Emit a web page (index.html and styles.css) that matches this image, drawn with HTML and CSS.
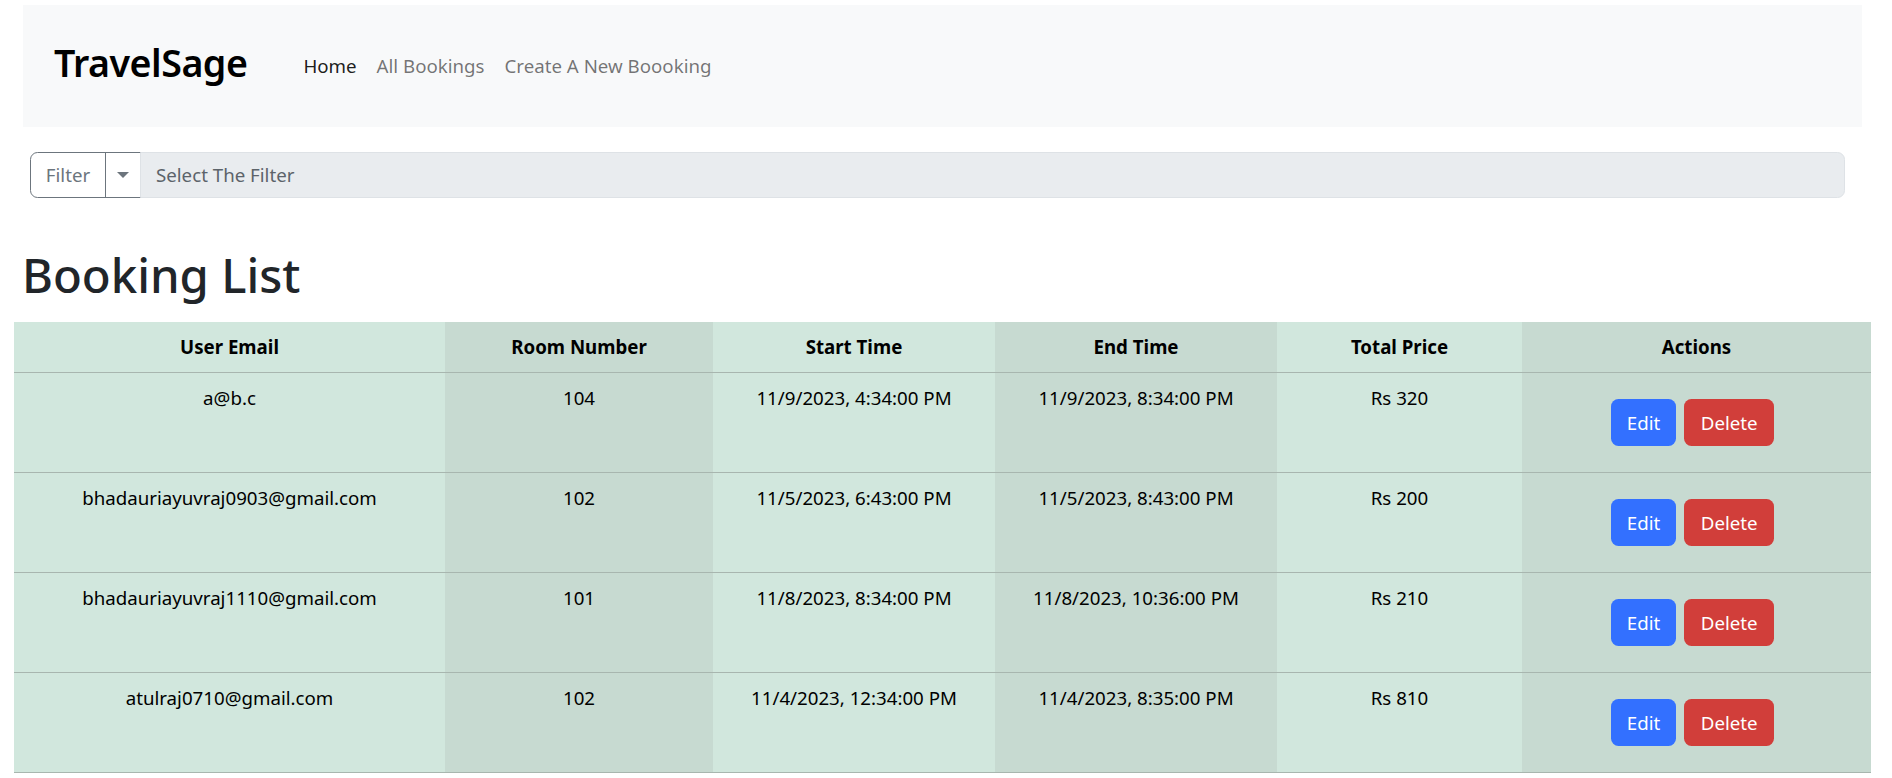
FILE: index.html
```html
<!DOCTYPE html>
<html lang="en">
<head>
<meta charset="utf-8">
<title>TravelSage</title>
<link rel="stylesheet" href="styles.css">
</head>
<body>
<nav class="navbar">
  <a class="brand" href="#">TravelSage</a>
  <ul class="nav">
    <li><a class="nav-link active" href="#">Home</a></li>
    <li><a class="nav-link" href="#">All Bookings</a></li>
    <li><a class="nav-link" href="#">Create A New Boooking</a></li>
  </ul>
</nav>

<div class="filter-group">
  <button class="filter-btn">Filter</button>
  <button class="filter-toggle"><span class="caret"></span></button>
  <div class="filter-input">Select The Filter</div>
</div>

<h1 class="title">Booking List</h1>

<table class="bookings">
  <thead>
    <tr>
      <th class="c-email">User Email</th>
      <th class="c-room">Room Number</th>
      <th class="c-start">Start Time</th>
      <th class="c-end">End Time</th>
      <th class="c-price">Total Price</th>
      <th class="c-actions">Actions</th>
    </tr>
  </thead>
  <tbody>
    <tr>
      <td>a@b.c</td>
      <td>104</td>
      <td>11/9/2023, 4:34:00 PM</td>
      <td>11/9/2023, 8:34:00 PM</td>
      <td>Rs 320</td>
      <td><div class="actions"><button class="btn btn-edit">Edit</button><button class="btn btn-delete">Delete</button></div></td>
    </tr>
    <tr>
      <td>bhadauriayuvraj0903@gmail.com</td>
      <td>102</td>
      <td>11/5/2023, 6:43:00 PM</td>
      <td>11/5/2023, 8:43:00 PM</td>
      <td>Rs 200</td>
      <td><div class="actions"><button class="btn btn-edit">Edit</button><button class="btn btn-delete">Delete</button></div></td>
    </tr>
    <tr>
      <td>bhadauriayuvraj1110@gmail.com</td>
      <td>101</td>
      <td>11/8/2023, 8:34:00 PM</td>
      <td>11/8/2023, 10:36:00 PM</td>
      <td>Rs 210</td>
      <td><div class="actions"><button class="btn btn-edit">Edit</button><button class="btn btn-delete">Delete</button></div></td>
    </tr>
    <tr>
      <td>atulraj0710@gmail.com</td>
      <td>102</td>
      <td>11/4/2023, 12:34:00 PM</td>
      <td>11/4/2023, 8:35:00 PM</td>
      <td>Rs 810</td>
      <td><div class="actions"><button class="btn btn-edit">Edit</button><button class="btn btn-delete">Delete</button></div></td>
    </tr>
  </tbody>
</table>
</body>
</html>
```

FILE: styles.css
```css
* { box-sizing: border-box; }

body {
  margin: 0;
  font-family: "Noto Sans", "Open Sans", sans-serif;
  font-size: 18.7px;
  line-height: 30px;
  color: #212529;
  background: #fff;
}

.navbar {
  display: flex;
  align-items: center;
  height: 122px;
  margin: 5px 30px 0 23px;
  padding-left: 31px;
  background: #f8f9fa;
}

.brand {
  font-size: 37.6px;
  font-weight: 600;
  line-height: 48px;
  color: #000;
  text-decoration: none;
  margin-right: 46px;
  margin-top: -6px;
  letter-spacing: -0.5px;
}

.nav {
  display: flex;
  list-style: none;
  margin: 0;
  padding: 0;
}

.nav-link {
  display: block;
  padding: 0 10px;
  color: rgba(0, 0, 0, 0.55);
  text-decoration: none;
}

.nav-link.active { color: rgba(0, 0, 0, 0.9); }

.filter-group {
  display: flex;
  height: 46px;
  margin: 25px 47px 0 30px;
}

.filter-btn,
.filter-toggle {
  font: inherit;
  color: #6c757d;
  background: #fff;
  border: 1px solid #6c757d;
  margin: 0;
}

.filter-btn {
  width: 76px;
  padding: 0;
  border-radius: 7.5px 0 0 7.5px;
}

.filter-toggle {
  width: 36px;
  margin-left: -1px;
  padding: 0;
  display: flex;
  align-items: center;
  justify-content: center;
}

.caret {
  width: 0;
  height: 0;
  border-top: 6px solid #6c757d;
  border-left: 6px solid transparent;
  border-right: 6px solid transparent;
}

.filter-input {
  flex: 1;
  display: flex;
  align-items: center;
  padding-left: 15px;
  margin-left: -1px;
  background: #e9ecef;
  border: 1px solid #dee2e6;
  border-radius: 0 7.5px 7.5px 0;
  color: #5c636a;
}

.title {
  margin: 47px 0 17px 22px;
  font-size: 47.3px;
  font-weight: 500;
  line-height: 60px;
  color: #212529;
}

.bookings {
  margin-left: 14px;
  width: 1857px;
  border-collapse: collapse;
  table-layout: fixed;
  background: #d1e7dd;
}

.bookings th,
.bookings td {
  padding: 10px;
  text-align: center;
  vertical-align: top;
  border-bottom: 1px solid #a8b6af;
}

.bookings th {
  font-weight: 700;
  color: #000;
}

.bookings td { color: #000; }

.bookings th:nth-child(even),
.bookings td:nth-child(even) { background: #c7dad1; }

.c-email { width: 431px; }
.c-room { width: 268px; }
.c-start { width: 282px; }
.c-end { width: 282px; }
.c-price { width: 245px; }
.c-actions { width: 349px; }

.actions {
  display: flex;
  justify-content: center;
  margin: 16px 0;
}

.btn {
  font: inherit;
  color: #fff;
  height: 47px;
  padding: 0 15px;
  margin-right: 8px;
  border: 1px solid transparent;
  border-radius: 7.5px;
}

.btn-edit { background: #3370ff; min-width: 65px; }
.btn-delete { background: #d13e3a; min-width: 90px; }
```
